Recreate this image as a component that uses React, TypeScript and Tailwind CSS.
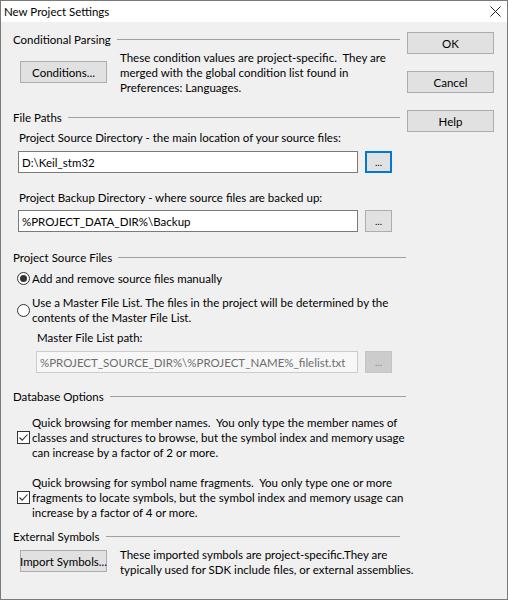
import React from "react";

const font = { fontFamily: 'Lato, "Liberation Sans", sans-serif' };

function GroupHeader({ title, lineEnd = "mr-0" }: { title: string; lineEnd?: string }) {
  return (
    <div className={`flex items-center h-[16px] ${lineEnd}`}>
      <span className="whitespace-nowrap pr-[6px]">{title}</span>
      <div className="flex-1 h-px bg-[#a0a0a0]" />
    </div>
  );
}

function Button({ label, focused, className = "" }: { label: string; focused?: boolean; className?: string }) {
  return (
    <div
      className={`flex items-center justify-center bg-[#e1e1e1] border whitespace-nowrap ${
        focused ? "border-[#0078d7] shadow-[inset_0_0_0_1px_#0078d7]" : "border-[#adadad]"
      } ${className}`}
    >
      {label}
    </div>
  );
}

function PathRow({ value, focused }: { value: string; focused?: boolean }) {
  return (
    <div className="flex items-center ml-[5px] h-[22px]">
      <div className="w-[340px] h-[22px] bg-white border border-[#7a7a7a] flex items-center px-[3px] whitespace-nowrap">
        {value}
      </div>
      <Button label="..." focused={focused} className="ml-[7px] w-[27px] h-[22px] text-[10px]" />
    </div>
  );
}

function CheckBox() {
  return (
    <div className="w-[13px] h-[13px] border border-[#333] bg-white flex items-center justify-center shrink-0">
      <svg width="11" height="11" viewBox="0 0 11 11">
        <path d="M1.5 5.5 L4.2 8.2 L9.5 2.5" fill="none" stroke="#333" strokeWidth="1.1" />
      </svg>
    </div>
  );
}

function Radio({ checked }: { checked?: boolean }) {
  return (
    <div className="w-[13px] h-[13px] rounded-full border border-[#333] bg-white flex items-center justify-center shrink-0">
      {checked && <div className="w-[7px] h-[7px] rounded-full bg-[#333]" />}
    </div>
  );
}

export default function App() {
  return (
    <div
      className="w-[508px] h-[600px] bg-[#f0f0f0] border border-[#7a7a7a] flex flex-col text-[11.5px] leading-[15px] text-[#000] overflow-hidden"
      style={font}
    >
      {/* title bar */}
      <div className="h-[21px] bg-white flex items-center justify-between pl-[3px] pr-[6px] shrink-0">
        <span>New Project Settings</span>
        <svg width="11" height="11" viewBox="0 0 11 11">
          <path d="M0.5 0.5 L10.5 10.5 M10.5 0.5 L0.5 10.5" stroke="#222" strokeWidth="1" />
        </svg>
      </div>

      <div className="flex flex-1">
        {/* settings column */}
        <div className="flex flex-col w-[405px] pl-[12px] whitespace-nowrap">
          <div className="mt-[9px]">
            <GroupHeader title="Conditional Parsing" lineEnd="mr-[6px]" />
          </div>
          <div className="flex mt-[3px] h-[45px]">
            <Button label="Conditions..." className="ml-[7px] mt-[11px] w-[87px] h-[22px]" />
            <p className="ml-[13px]">
              These condition values are project-specific.&nbsp; They are
              <br />
              merged with the global condition list found in
              <br />
              Preferences: Languages.
            </p>
          </div>

          <div className="mt-[14px]">
            <GroupHeader title="File Paths" lineEnd="mr-[6px]" />
          </div>
          <p className="mt-[5px] ml-[6px]">Project Source Directory - the main location of your source files:</p>
          <div className="mt-[6px]">
            <PathRow value="D:\Keil_stm32" focused />
          </div>
          <p className="mt-[17px] ml-[6px]">Project Backup Directory - where source files are backed up:</p>
          <div className="mt-[5px]">
            <PathRow value="%PROJECT_DATA_DIR%\Backup" />
          </div>

          <div className="mt-[17px]">
            <GroupHeader title="Project Source Files" />
          </div>
          <div className="flex items-center gap-[2px] mt-[6px] ml-[4px]">
            <Radio checked />
            <span>Add and remove source files manually</span>
          </div>
          <div className="flex items-center gap-[2px] mt-[9px] ml-[4px]">
            <Radio />
            <p>
              Use a Master File List. The files in the project will be determined by the
              <br />
              contents of the Master File List.
            </p>
          </div>
          <p className="mt-[5px] ml-[24px]">Master File List path:</p>
          <div className="flex items-center mt-[6px] ml-[23px] h-[22px]">
            <div className="w-[322px] h-[22px] bg-[#f7f7f7] border border-[#cccccc] flex items-center px-[3px] text-[#6d6d6d]">
              %PROJECT_SOURCE_DIR%\%PROJECT_NAME%_filelist.txt
            </div>
            <div className="ml-[7px] w-[27px] h-[22px] bg-[#cccccc] border border-[#c4c4c4] flex items-center justify-center text-[10px] text-[#8a8a8a]">
              ...
            </div>
          </div>

          <div className="mt-[15px]">
            <GroupHeader title="Database Options" />
          </div>
          <div className="flex items-center gap-[2px] mt-[11px] ml-[4px]">
            <CheckBox />
            <p>
              Quick browsing for member names.&nbsp; You only type the member names of
              <br />
              classes and structures to browse, but the symbol index and memory usage
              <br />
              can increase by a factor of 2 or more.
            </p>
          </div>
          <div className="flex items-center gap-[2px] mt-[15px] ml-[4px]">
            <CheckBox />
            <p>
              Quick browsing for symbol name fragments.&nbsp; You only type one or more
              <br />
              fragments to locate symbols, but the symbol index and memory usage can
              <br />
              increase by a factor of 4 or more.
            </p>
          </div>

          <div className="mt-[8px]">
            <GroupHeader title="External Symbols" lineEnd="mr-[6px]" />
          </div>
          <div className="flex mt-[3px]">
            <Button label="Import Symbols..." className="ml-[7px] mt-[3px] w-[87px] h-[22px]" />
            <p className="ml-[13px]">
              These imported symbols are project-specific.They are
              <br />
              typically used for SDK include files, or external assemblies.
            </p>
          </div>
        </div>

        {/* dialog buttons */}
        <div className="flex flex-col gap-[17px] ml-[1px] mt-[10px]">
          <Button label="OK" className="w-[87px] h-[22px]" />
          <Button label="Cancel" className="w-[87px] h-[22px]" />
          <Button label="Help" className="w-[87px] h-[22px]" />
        </div>
      </div>
    </div>
  );
}
